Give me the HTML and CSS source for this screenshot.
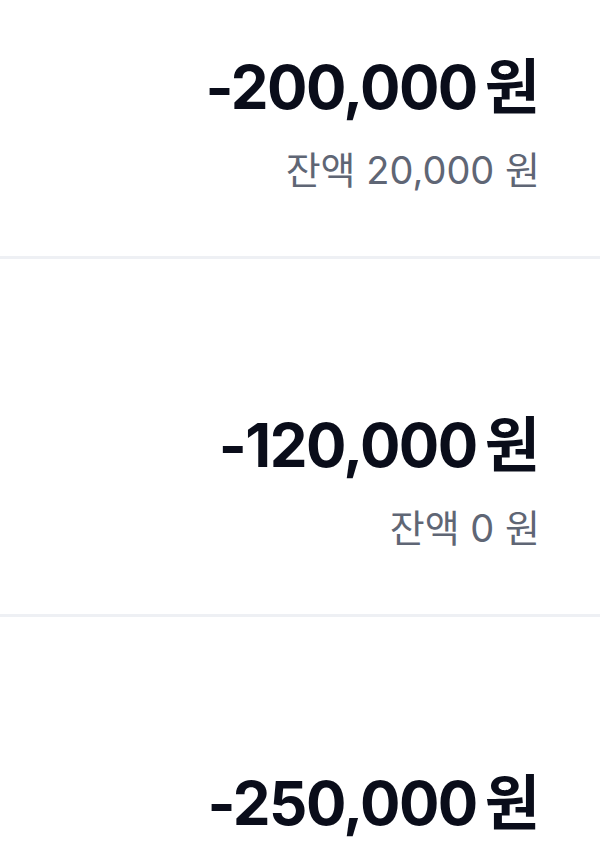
FILE: index.html
```html
<!DOCTYPE html>
<html lang="ko">
<head>
<meta charset="utf-8">
<link rel="stylesheet" href="styles.css">
</head>
<body>
<div class="list">
  <div class="row">
    <div class="amount">-200,000<span class="unit">원</span></div>
    <div class="balance">잔액 20,000 원</div>
  </div>
  <div class="row">
    <div class="amount">-120,000<span class="unit">원</span></div>
    <div class="balance">잔액 0 원</div>
  </div>
  <div class="row">
    <div class="amount">-250,000<span class="unit">원</span></div>
  </div>
</div>
</body>
</html>
```
FILE: styles.css
```css
html, body {
  margin: 0;
  padding: 0;
  background: #ffffff;
  overflow: hidden;
}
body {
  font-family: "Inter", "Noto Sans CJK KR", sans-serif;
  width: 600px;
  height: 860px;
}
.list {
  margin-top: -99px;
  display: flex;
  flex-direction: column;
}
.row {
  box-sizing: border-box;
  height: 358px;
  padding: 150px 60px 0 0;
  border-bottom: 3px solid #eef0f4;
  display: flex;
  flex-direction: column;
  align-items: flex-end;
}
.row:last-child {
  height: 260px;
  border-bottom: none;
}
.amount {
  font-size: 60px;
  line-height: 72px;
  font-weight: 700;
  color: #0a0d1a;
  letter-spacing: -1.5px;
}
.unit {
  margin-left: 8px;
  letter-spacing: 0;
}
.balance {
  margin-top: 24px;
  font-size: 38px;
  line-height: 46px;
  color: #5f6675;
}
```
